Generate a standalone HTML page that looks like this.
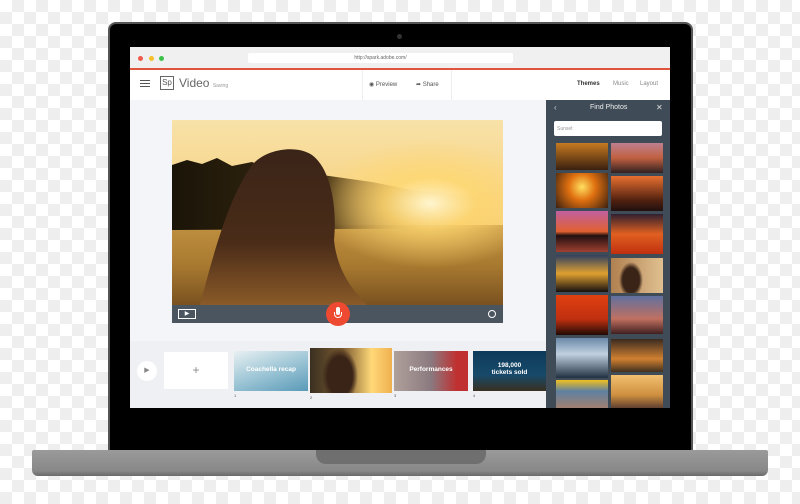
<!DOCTYPE html><html><head><style>
*{margin:0;padding:0;box-sizing:border-box}
body{width:800px;height:504px;overflow:hidden;position:relative;font-family:"Liberation Sans",sans-serif;
background-color:#fff;background-image:linear-gradient(45deg,#eee 25%,transparent 25%,transparent 75%,#eee 75%),linear-gradient(45deg,#eee 25%,transparent 25%,transparent 75%,#eee 75%);background-size:24px 24px;background-position:0 0,12px 12px}
.a{position:absolute}
</style></head><body>
<div class="a" style="left:108px;top:22px;width:585px;height:432px;background:#000;border-radius:8px 8px 0 0;border:2px solid #555"></div>
<div class="a" style="left:397px;top:34px;width:5px;height:5px;border-radius:50%;background:#333"></div>
<div class="a" style="left:32px;top:450px;width:736px;height:26px;background:linear-gradient(#9a9a9a,#888 80%,#6a6a6a);border-radius:2px 2px 6px 6px"></div>
<div class="a" style="left:316px;top:450px;width:170px;height:14px;background:#6f6f6f;border-radius:0 0 10px 10px"></div>
<div class="a" style="left:130px;top:47px;width:540px;height:361px;background:#f4f5f8;overflow:hidden">
 <div class="a" style="left:0;top:0;width:540px;height:21px;background:#f0f0f0"></div>
 <div class="a" style="left:8px;top:9px;width:5px;height:5px;border-radius:50%;background:#f05a4a"></div>
 <div class="a" style="left:19px;top:9px;width:5px;height:5px;border-radius:50%;background:#f5c02a"></div>
 <div class="a" style="left:29px;top:9px;width:5px;height:5px;border-radius:50%;background:#3cc24a"></div>
 <div class="a" style="left:118px;top:6px;width:265px;height:10px;background:#fff;border-radius:2px;font-size:5px;color:#666;text-align:center;line-height:10px">http://spark.adobe.com/</div>
 <div class="a" style="left:0;top:21px;width:540px;height:2px;background:#e0533c"></div>
 <div class="a" style="left:0;top:23px;width:540px;height:30px;background:#fff"></div>
 <div class="a" style="left:10px;top:33px;width:10px;height:1px;background:#555;box-shadow:0 3px #555,0 6px #555"></div>
 <div class="a" style="left:30px;top:29px;width:14px;height:14px;border:1px solid #666;font-size:8px;color:#555;text-align:center;line-height:12px">Sp</div>
 <div class="a" style="left:49px;top:29px;font-size:12px;color:#666">Video <span style="font-size:5px;color:#999">Saving</span></div>
 <div class="a" style="left:232px;top:23px;width:90px;height:30px;border-left:1px solid #eee;border-right:1px solid #eee"></div>
 <div class="a" style="left:239px;top:34px;font-size:6px;color:#555">◉ Preview</div>
 <div class="a" style="left:286px;top:34px;font-size:6px;color:#555">➦ Share</div>
 <div class="a" style="left:447px;top:34px;font-size:6px;color:#333;font-weight:bold">Themes</div>
 <div class="a" style="left:483px;top:34px;font-size:6px;color:#888">Music</div>
 <div class="a" style="left:510px;top:34px;font-size:6px;color:#888">Layout</div>
 <svg class="a" style="left:42px;top:73px" width="331" height="185" viewBox="0 0 331 185">
  <defs>
   <linearGradient id="sky" x1="0" y1="0" x2="0" y2="1"><stop offset="0" stop-color="#f8e2a8"/><stop offset="0.5" stop-color="#f6d080"/><stop offset="1" stop-color="#e8b050"/></linearGradient>
   <radialGradient id="sun" cx="0.78" cy="0.45" r="0.35"><stop offset="0" stop-color="#fff6d0"/><stop offset="0.4" stop-color="#ffd870" stop-opacity="0.8"/><stop offset="1" stop-color="#ffd870" stop-opacity="0"/></radialGradient>
   <linearGradient id="field" x1="0" y1="0" x2="0" y2="1"><stop offset="0" stop-color="#c09040"/><stop offset="0.5" stop-color="#a87a30"/><stop offset="1" stop-color="#7a5220"/></linearGradient>
   <linearGradient id="trees" x1="0" y1="0" x2="1" y2="0"><stop offset="0" stop-color="#1a1408"/><stop offset="0.45" stop-color="#3a2a10"/><stop offset="0.75" stop-color="#c89040" stop-opacity="0.6"/><stop offset="1" stop-color="#f0c060" stop-opacity="0"/></linearGradient>
   <linearGradient id="hair" x1="0" y1="0" x2="0" y2="1"><stop offset="0" stop-color="#3a2418"/><stop offset="0.6" stop-color="#4a2c18"/><stop offset="1" stop-color="#8a5a28"/></linearGradient>
  </defs>
  <rect width="331" height="185" fill="url(#sky)"/>
  <rect y="105" width="331" height="80" fill="url(#field)"/>
  <path d="M0,45 L15,40 L30,44 L45,38 L60,46 L80,42 L100,50 L150,55 L200,62 L240,70 L290,75 L331,72 L331,108 L0,110 Z" fill="url(#trees)"/>
  <rect width="331" height="185" fill="url(#sun)"/>
  <path d="M28,185 C40,140 55,80 80,45 C95,28 125,25 140,35 C160,50 165,90 162,120 C165,150 180,170 195,185 Z" fill="url(#hair)"/>
 </svg>
 <div class="a" style="left:42px;top:258px;width:331px;height:18px;background:#4a5560"></div>
 <div class="a" style="left:48px;top:262px;width:18px;height:10px;border:1px solid #fff;font-size:6px;color:#fff;text-align:center;line-height:8px">▶</div>
 <div class="a" style="left:358px;top:263px;width:8px;height:8px;border:1px solid #fff;border-radius:50%"></div>
 <div class="a" style="left:196px;top:255px;width:24px;height:24px;border-radius:50%;background:#ee4a32"></div>
 <div class="a" style="left:206px;top:260px;width:4px;height:8px;border-radius:2px;background:#fff"></div>
 <div class="a" style="left:204px;top:265px;width:8px;height:6px;border:1px solid #fff;border-top:none;border-radius:0 0 4px 4px"></div>
 <div class="a" style="left:0;top:294px;width:416px;height:67px;background:#eef0f3"></div>
 <div class="a" style="left:7px;top:314px;width:20px;height:20px;border-radius:50%;background:#fff;font-size:7px;color:#888;text-align:center;line-height:20px">▶</div>
 <div class="a" style="left:34px;top:305px;width:64px;height:37px;background:#fff;font-size:12px;color:#888;text-align:center;line-height:37px">+</div>
 <div class="a" style="left:104px;top:304px;width:74px;height:40px;background:linear-gradient(160deg,#e8f0f2,#9ec6d6 50%,#5a9ab8);color:#fff;font-size:6.5px;font-weight:bold;text-align:center;padding-top:15px">Coachella recap</div>
 <div class="a" style="left:180px;top:301px;width:82px;height:45px;background:radial-gradient(ellipse 18px 28px at 30px 28px,#3a2418 70%,transparent 100%),linear-gradient(90deg,#3a3020,#7a5a30 40%,#ffd878 75%,#f0b050)"></div>
 <div class="a" style="left:264px;top:304px;width:74px;height:40px;background:linear-gradient(90deg,#b0a09a,#8a7a80 50%,#c03030 85%);color:#fff;font-size:6.5px;font-weight:bold;text-align:center;padding-top:15px">Performances</div>
 <div class="a" style="left:343px;top:304px;width:73px;height:40px;background:linear-gradient(#0d3a5a,#174a6a 60%,#3a3020);color:#fff;font-size:6.5px;font-weight:bold;text-align:center;padding-top:11px">198,000<br>tickets sold</div>
 <div class="a" style="left:104px;top:346px;font-size:4px;color:#555">1</div>
 <div class="a" style="left:180px;top:348px;font-size:4px;color:#555">2</div>
 <div class="a" style="left:264px;top:346px;font-size:4px;color:#555">3</div>
 <div class="a" style="left:343px;top:346px;font-size:4px;color:#555">4</div>
 <div class="a" style="left:416px;top:53px;width:124px;height:308px;background:#3f4c57"></div>
 <div class="a" style="left:424px;top:56px;font-size:8px;color:#ccc">‹</div>
 <div class="a" style="left:460px;top:57px;font-size:7px;color:#eee">Find Photos</div>
 <div class="a" style="left:526px;top:56px;font-size:8px;color:#ddd">✕</div>
 <div class="a" style="left:424px;top:74px;width:108px;height:15px;background:#fff;border-radius:2px;font-size:5px;color:#999;padding:5px 3px">Sunset</div>
 <div class="a" style="left:426px;top:96px;width:52px;height:27px;background:linear-gradient(#c77a20,#3a2010)"></div>
 <div class="a" style="left:481px;top:96px;width:52px;height:30px;background:linear-gradient(#c08090,#c06040 50%,#302020)"></div>
 <div class="a" style="left:426px;top:126px;width:52px;height:35px;background:radial-gradient(circle at 50% 40%,#ffe060,#e07010 40%,#3a2010)"></div>
 <div class="a" style="left:481px;top:129px;width:52px;height:35px;background:linear-gradient(#e87030,#502010 70%,#201010)"></div>
 <div class="a" style="left:426px;top:164px;width:52px;height:41px;background:linear-gradient(#c060a0,#e06030 50%,#201010 60%,#a04030)"></div>
 <div class="a" style="left:481px;top:167px;width:52px;height:40px;background:linear-gradient(#302030,#e06020 50%,#c03010)"></div>
 <div class="a" style="left:426px;top:208px;width:52px;height:37px;background:linear-gradient(#304060,#e0a030 50%,#151010)"></div>
 <div class="a" style="left:481px;top:211px;width:52px;height:35px;background:radial-gradient(ellipse 12px 18px at 20px 22px,#3a2418 70%,transparent 100%),linear-gradient(90deg,#b08050,#e0c090)"></div>
 <div class="a" style="left:426px;top:248px;width:52px;height:40px;background:linear-gradient(#e04010,#c03010 60%,#200a05)"></div>
 <div class="a" style="left:481px;top:249px;width:52px;height:38px;background:linear-gradient(#6070a0,#c07060 60%,#402020)"></div>
 <div class="a" style="left:426px;top:291px;width:52px;height:40px;background:linear-gradient(#6a88a8,#c0d0e0 40%,#203040)"></div>
 <div class="a" style="left:481px;top:292px;width:52px;height:33px;background:linear-gradient(#3a2a20,#d08030 60%,#403020)"></div>
 <div class="a" style="left:426px;top:333px;width:52px;height:28px;background:linear-gradient(#f0c020,#6080a0 40%,#a08070)"></div>
 <div class="a" style="left:481px;top:328px;width:52px;height:33px;background:linear-gradient(#f0c070,#d09040 60%,#604030)"></div>
</div>
</body></html>
